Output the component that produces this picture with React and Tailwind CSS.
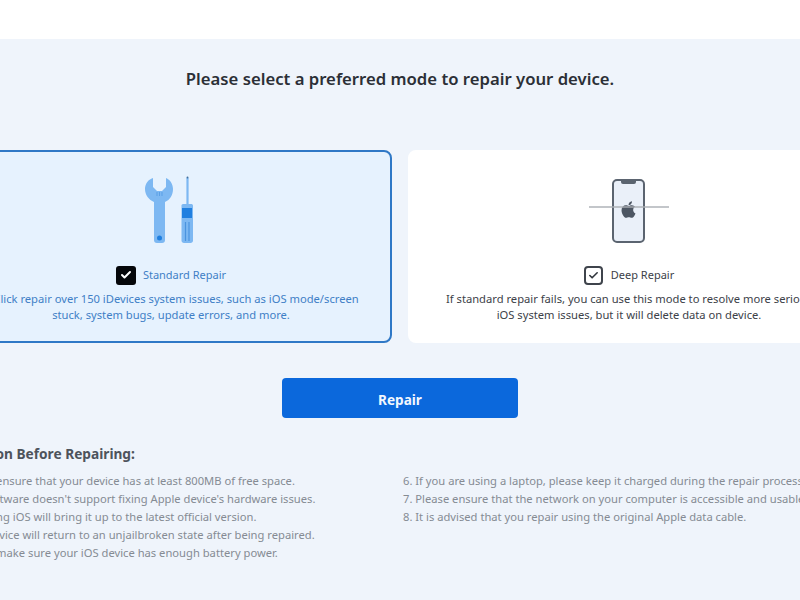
import React from "react";
import { Check } from "lucide-react";
import { FaApple } from "react-icons/fa";

const leftNotes = [
  "1. Please ensure that your device has at least 800MB of free space.",
  "2. This software doesn't support fixing Apple device's hardware issues.",
  "3. Repairing iOS will bring it up to the latest official version.",
  "4. Your device will return to an unjailbroken state after being repaired.",
  "5. Please make sure your iOS device has enough battery power.",
];

const rightNotes = [
  "6. If you are using a laptop, please keep it charged during the repair process.",
  "7. Please ensure that the network on your computer is accessible and usable.",
  "8. It is advised that you repair using the original Apple data cable.",
];

const ToolsIcon = () => (
  <svg width="80" height="80" viewBox="0 0 80 80">
    <path
      d="M22 7C17 8.5 14 13 14 18C14 24 18 29 23 31V69Q23 72 26 72H31Q34 72 34 69V31C39 29 42 24 42 18C42 13 39 8.5 35 7V16L31 20H26L22 16Z"
      fill="#7db8f2"
    />
    <path d="M26 21v4M28.5 21v4M31 21v4" stroke="#5a9fe6" strokeWidth="1" />
    <circle cx="28.5" cy="67" r="2.5" fill="#1f7fe0" />
    <path d="M56.5 7V33" stroke="#7db8f2" strokeWidth="2.2" />
    <circle cx="56.5" cy="6.5" r="1" fill="#3f6f9f" />
    <path
      d="M50.5 34.5C50.5 33.5 51.5 33 52.5 33H60C61 33 62 33.5 62 34.5V69.5C62 71 61 72 59.5 72H53C51.5 72 50.5 71 50.5 69.5Z"
      fill="#7db8f2"
    />
    <rect x="51" y="37" width="10" height="10" fill="#1f7fe0" />
    <path d="M54.5 51V70M58 51V70" stroke="#4b94df" strokeWidth="1.2" />
  </svg>
);

const PhoneIcon = () => (
  <div className="relative h-[80px] w-[80px]">
    <div className="absolute left-[23px] top-[8px] h-[64px] w-[33px] rounded-[5px] border-2 border-[#5b6470] bg-[#eaf0f9]">
      <div className="mx-auto h-[3px] w-[15px] rounded-b-[2px] bg-[#5b6470]" />
      <FaApple className="absolute left-[5px] top-[19px] h-[19px] w-[19px] text-[#4d5663]" />
    </div>
    <div className="absolute left-0 top-[35px] h-[2px] w-[80px] bg-[#a9aeb3]/70" />
  </div>
);

const ModeCard = ({ active, icon, label, children }) => (
  <div
    className={`flex h-[193px] w-[442px] shrink-0 flex-col items-center rounded-[8px] pt-[19px] ${
      active
        ? "border-2 border-[#2f78c6] bg-[#e6f2fe] text-[#3f7fc6]"
        : "border-2 border-white bg-white text-[#3c4148]"
    }`}
  >
    {icon}
    <div
      className={`mt-[14px] flex h-[20px] items-center ${
        active ? "gap-[7px]" : "gap-[8px]"
      }`}
    >
      {active ? (
        <span className="flex h-[19px] w-[20px] items-center justify-center rounded-[3px] bg-[#05070a]">
          <Check className="h-[12px] w-[12px] text-white" strokeWidth={4} />
        </span>
      ) : (
        <span className="flex h-[19px] w-[19px] items-center justify-center rounded-[4px] border-2 border-[#3f444c] bg-white">
          <Check className="h-[11px] w-[11px] text-[#30353c]" strokeWidth={3.5} />
        </span>
      )}
      <span className="text-[11px] leading-[16px]">{label}</span>
    </div>
    <p className="mt-[6px] max-w-[378px] text-center text-[11.2px] leading-[16px]">
      {children}
    </p>
  </div>
);

const App = () => {
  return (
    <div className="h-[600px] w-[800px] overflow-hidden bg-[#eff4fb] font-['Noto_Sans','Open_Sans',sans-serif]">
      <div className="h-[39px] bg-white" />

      <h1 className="mt-[28px] text-center text-[16.7px] font-semibold leading-[24px] text-[#2b2f36]">
        Please select a preferred mode to repair your device.
      </h1>

      <div className="ml-[-50px] mt-[59px] flex w-[900px] gap-[16px]">
        <ModeCard active icon={<ToolsIcon />} label="Standard Repair">
          1-Click repair over 150 iDevices system issues, such as iOS
          mode/screen stuck, system bugs, update errors, and more.
        </ModeCard>
        <ModeCard icon={<PhoneIcon />} label="Deep Repair">
          If standard repair fails, you can use this mode to resolve more
          serious iOS system issues, but it will delete data on device.
        </ModeCard>
      </div>

      <div className="mt-[35px] flex justify-center">
        <button
          type="button"
          className="h-[40px] w-[236px] rounded-[4px] bg-[#0b68dc] pt-[4px] text-[13.6px] font-bold text-[#f2f7fe]"
        >
          Repair
        </button>
      </div>

      <div className="ml-[-53px] mt-[26px] flex w-[1000px]">
        <div className="w-[456px] shrink-0">
          <h2 className="text-[13.7px] font-bold leading-[20px] text-[#4d535b]">
            Attention Before Repairing:
          </h2>
          <ul className="mt-[8px] text-[11.2px] leading-[18px] text-[#858b93]">
            {leftNotes.map((note) => (
              <li key={note} className="whitespace-nowrap">
                {note}
              </li>
            ))}
          </ul>
        </div>
        <ul className="mt-[28px] text-[11.2px] leading-[18px] text-[#858b93]">
          {rightNotes.map((note) => (
            <li key={note} className="whitespace-nowrap">
              {note}
            </li>
          ))}
        </ul>
      </div>
    </div>
  );
};

export default App;
